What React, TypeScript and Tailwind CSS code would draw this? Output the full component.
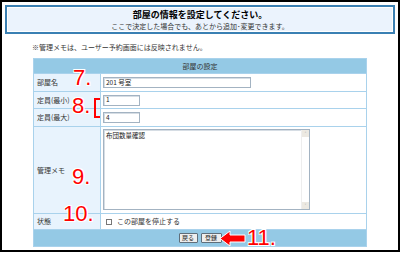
import React from 'react';

const jp = "font-['Noto_Sans_CJK_JP','Noto_Sans',sans-serif]";
const mark =
  "absolute font-['Liberation_Sans',Arial,sans-serif] text-[22px] leading-none text-[#ff0000] [text-shadow:1px_1px_0_#fff,-1px_-1px_0_#fff,1px_-1px_0_#fff,-1px_1px_0_#fff]";

const Label: React.FC<{ children: React.ReactNode }> = ({ children }) => (
  <div className="w-[67px] shrink-0 bg-[#e8f3fd] border-r border-[#a9d2ec] flex items-center pl-[3px] text-[7px] text-[#333]">
    {children}
  </div>
);

const App: React.FC = () => {
  return (
    <div className={`relative w-[400px] h-[253px] bg-white ${jp}`}>
      <div className="h-[252px] border-2 border-black">
        {/* Header box */}
        <div className="mx-[3px] mt-[3px] h-[29px] border-2 border-[#3a80b3] bg-white p-px">
          <div className="h-full bg-[#ebf3fd] flex flex-col items-center justify-center">
            <p className="text-[9px] leading-[12px] font-bold text-black">部屋の情報を設定してください。</p>
            <p className="text-[7px] leading-[10px] text-[#333]">ここで決定した場合でも、あとから追加･変更できます。</p>
          </div>
        </div>

        <p className="mt-[8px] ml-[30px] text-[7px] leading-[10px] text-[#333]">※管理メモは、ユーザー予約画面には反映されません。</p>

        {/* Settings table */}
        <div className="ml-[31px] mt-[6px] w-[334px] border-x border-[#a9d2ec] text-[#222]">
          <div className="h-[15px] bg-[#94c9e5] border-t border-[#a9d2ec] flex items-center justify-center text-[7px] text-[#333]">
            部屋の設定
          </div>
          <div className="h-[18px] flex border-t border-[#a9d2ec]">
            <Label>部屋名</Label>
            <div className="flex-1 flex items-center pl-[2px]">
              <div className="w-[148px] h-[11px] border border-[#a3b3c2] shadow-[inset_1px_1px_0_#d6dde4] flex items-center pl-[2px] text-[6.5px]">201 号室</div>
            </div>
          </div>
          <div className="h-[17px] flex border-t border-[#a9d2ec]">
            <Label>定員(最小)</Label>
            <div className="flex-1 flex items-center pl-[2px]">
              <div className="w-[37px] h-[11px] border border-[#a3b3c2] shadow-[inset_1px_1px_0_#d6dde4] flex items-center pl-[2px] text-[6.5px]">1</div>
            </div>
          </div>
          <div className="h-[18px] flex border-t border-[#a9d2ec]">
            <Label>定員(最大)</Label>
            <div className="flex-1 flex items-center pl-[2px]">
              <div className="w-[37px] h-[11px] border border-[#a3b3c2] shadow-[inset_1px_1px_0_#d6dde4] flex items-center pl-[2px] text-[6.5px]">4</div>
            </div>
          </div>
          <div className="h-[87px] flex border-t border-[#a9d2ec]">
            <Label>管理メモ</Label>
            <div className="flex-1 pl-[2px] pt-[2px]">
              <div className="w-[207px] h-[81px] border border-[#a3b3c2] shadow-[inset_1px_1px_0_#d6dde4] flex">
                <div className="flex-1 pl-[2px] pt-px text-[6.5px] leading-[9px]">布団数量確認</div>
                <div className="w-[8px] border-l border-[#eeeeee] flex flex-col justify-between">
                  <div className="h-[7px] bg-[#ece9e2] flex items-center justify-center text-[5px] text-[#999] leading-none">˄</div>
                  <div className="h-[7px] bg-[#ece9e2] flex items-center justify-center text-[5px] text-[#999] leading-none">˅</div>
                </div>
              </div>
            </div>
          </div>
          <div className="h-[16px] flex border-t border-[#a9d2ec]">
            <Label>状態</Label>
            <div className="flex-1 flex items-center pl-[5px] gap-[5px] text-[7px] text-[#333]">
              <span className="w-[6px] h-[6px] border border-[#777] bg-white" />
              <span>この部屋を停止する</span>
            </div>
          </div>
          <div className="h-[18px] bg-[#94c9e5] border-y border-[#a9d2ec] flex items-center justify-center gap-[3px]">
            <button className="w-[19px] h-[10px] border border-[#5f6e7a] rounded-[1px] bg-[#eeeeee] text-[6px] leading-none text-[#222]">戻る</button>
            <button className="w-[21px] h-[10px] border border-[#5f6e7a] rounded-[1px] bg-[#eeeeee] text-[6px] leading-none text-[#222]">登録</button>
          </div>
        </div>
      </div>

      {/* Red annotations */}
      <span className={`${mark} left-[73px] top-[67px]`}>7.</span>
      <span className={`${mark} left-[72px] top-[95px]`}>8.</span>
      <div className="absolute left-[94px] top-[98px] w-[6px] h-[20px] border-l-2 border-y-2 border-[#ff0000]" />
      <span className={`${mark} left-[72px] top-[166px]`}>9.</span>
      <span className={`${mark} left-[63px] top-[203px]`}>10.</span>
      <svg className="absolute left-[219px] top-[230px]" width="27" height="17" viewBox="0 0 27 17">
        <polygon points="1,8.5 11,1 11,5 26,5 26,12 11,12 11,16" fill="#ff0000" stroke="#fff" strokeWidth="1" />
      </svg>
      <span className={`${mark} left-[247px] top-[227px]`}>11.</span>
    </div>
  );
};

export default App;
